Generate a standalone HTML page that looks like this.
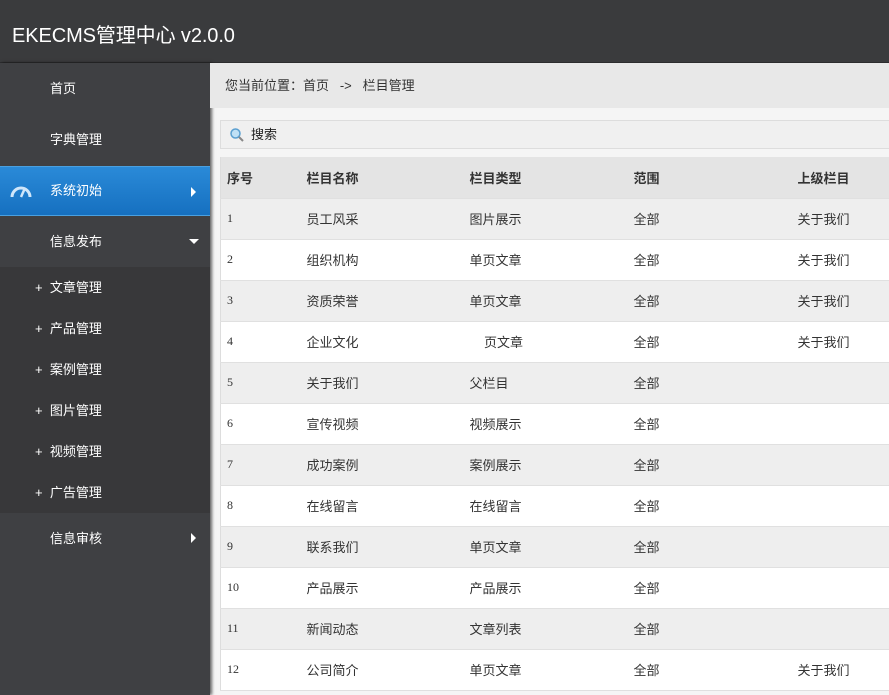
<!DOCTYPE html>
<html><head><meta charset="utf-8"><style>
*{margin:0;padding:0;box-sizing:border-box}
body{width:889px;height:695px;overflow:hidden;background:#f5f5f5;font-family:"Liberation Sans","Noto Sans CJK SC",sans-serif;position:relative}
.hd{position:absolute;left:0;top:0;width:889px;height:63px;background:#3a3b3d;border-bottom:1px solid #2c2c2e}
.hd span{position:absolute;left:12px;top:19px;color:#fff;font-size:20px;letter-spacing:-0.1px}
.sb{position:absolute;left:0;top:63px;width:210px;height:632px;background:#3f4043;box-shadow:2px 0 3px rgba(0,0,0,.6)}
.mi{position:absolute;left:0;width:210px;height:51px;color:#fff;font-size:13px;line-height:51px;padding-left:50px}
.act{background:linear-gradient(#2a8ad8,#1670c0);border-top:1px solid #4aa0e0;border-bottom:1px solid #4aa0e0}
.sub{position:absolute;left:0;top:204px;width:210px;height:246px;background:#38383a}
.si{height:41px;line-height:41px;color:#fff;font-size:13px;padding-left:35px}
.tri{position:absolute;right:14px;top:20px;width:0;height:0;border-left:5px solid #fff;border-top:5px solid transparent;border-bottom:5px solid transparent}
.tri2{position:absolute;right:11px;top:23px;width:0;height:0;border-top:5px solid #fff;border-left:5px solid transparent;border-right:5px solid transparent}
.bc{position:absolute;left:210px;top:63px;width:679px;height:45px;background:#e8e8e8;font-size:13px;color:#333;line-height:45px;padding-left:15px}
.search{position:absolute;left:220px;top:120px;width:680px;height:29px;border:1px solid #ddd;background:#f0f0f0;font-size:13px;color:#222;line-height:27px;padding-left:30px}
table{position:absolute;left:220px;top:157px;width:700px;border-collapse:collapse;font-size:13px;color:#333;border-left:1px solid #ddd}
td,th{height:41px;text-align:left;border-bottom:1px solid #e0e0e0;font-weight:normal}
th{font-weight:bold;background:#e4e4e4}
tr:nth-child(even) td{background:#eeeeee}
tr:nth-child(odd) td{background:#fff}
td:first-child,th:first-child{padding-left:6px;width:86px}
td:first-child{font-family:"Liberation Serif",serif;font-size:12px;vertical-align:top;padding-top:12px}
</style></head><body>
<div class="hd"><span>EKECMS管理中心 v2.0.0</span></div>
<div class="sb">
<div class="mi" style="top:0">首页</div>
<div class="mi" style="top:51px">字典管理</div>
<div class="mi act" style="top:103px;height:50px;line-height:48px">
<svg style="position:absolute;left:10px;top:16px" width="22" height="16" viewBox="0 0 22 16"><path d="M2 14 A9 9 0 0 1 20 14" fill="none" stroke="#cfe6fa" stroke-width="3"/><path d="M11 14 L15 5" stroke="#cfe6fa" stroke-width="2.5"/></svg>
系统初始<div class="tri"></div></div>
<div class="mi" style="top:153px">信息发布<div class="tri2"></div></div>
<div class="sub">
<div class="si">+&nbsp; 文章管理</div><div class="si">+&nbsp; 产品管理</div><div class="si">+&nbsp; 案例管理</div><div class="si">+&nbsp; 图片管理</div><div class="si">+&nbsp; 视频管理</div><div class="si">+&nbsp; 广告管理</div>
</div>
<div class="mi" style="top:450px">信息审核<div class="tri"></div></div>
</div>
<div class="bc">您当前位置：首页 &nbsp; -&gt; &nbsp; 栏目管理</div>
<div class="search"><svg style="position:absolute;left:9px;top:7px" width="14" height="14" viewBox="0 0 14 14"><circle cx="5.5" cy="5.5" r="4.5" fill="#bfe0f5" stroke="#5a9fd0" stroke-width="1.5"/><path d="M9 9 L13 13" stroke="#888" stroke-width="2"/></svg>搜索</div>
<table>
<tr><th>序号</th><th style="width:163px">栏目名称</th><th style="width:164px">栏目类型</th><th style="width:164px">范围</th><th>上级栏目</th></tr>
<tr><td>1</td><td>员工风采</td><td>图片展示</td><td>全部</td><td>关于我们</td></tr>
<tr><td>2</td><td>组织机构</td><td>单页文章</td><td>全部</td><td>关于我们</td></tr>
<tr><td>3</td><td>资质荣誉</td><td>单页文章</td><td>全部</td><td>关于我们</td></tr>
<tr><td>4</td><td>企业文化</td><td>&nbsp;&nbsp;&nbsp;&nbsp;页文章</td><td>全部</td><td>关于我们</td></tr>
<tr><td>5</td><td>关于我们</td><td>父栏目</td><td>全部</td><td></td></tr>
<tr><td>6</td><td>宣传视频</td><td>视频展示</td><td>全部</td><td></td></tr>
<tr><td>7</td><td>成功案例</td><td>案例展示</td><td>全部</td><td></td></tr>
<tr><td>8</td><td>在线留言</td><td>在线留言</td><td>全部</td><td></td></tr>
<tr><td>9</td><td>联系我们</td><td>单页文章</td><td>全部</td><td></td></tr>
<tr><td>10</td><td>产品展示</td><td>产品展示</td><td>全部</td><td></td></tr>
<tr><td>11</td><td>新闻动态</td><td>文章列表</td><td>全部</td><td></td></tr>
<tr><td>12</td><td>公司简介</td><td>单页文章</td><td>全部</td><td>关于我们</td></tr>
</table>
</body></html>
